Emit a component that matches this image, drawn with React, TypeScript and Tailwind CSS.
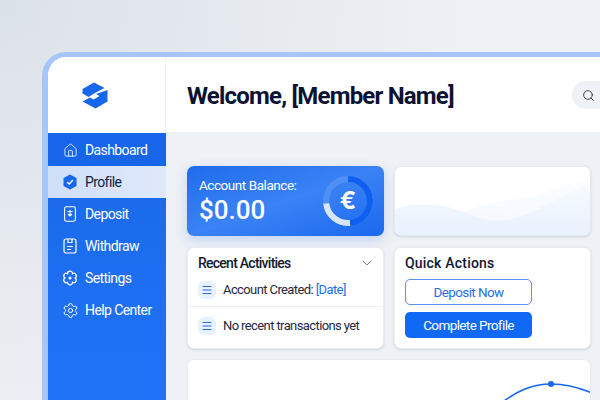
import type { ReactNode } from "react";
import { Settings, House, ChevronDown, Search, Menu } from "lucide-react";

const roboto = "font-['Roboto','Liberation_Sans',sans-serif]";

function Logo() {
  return (
    <svg width="26" height="27" viewBox="0 0 26 27" fill="#1667ea">
      <path d="M0.5 7 L12 0.5 L22.5 6 L12 11.5 L6.5 15 L0.5 11.5 Z" />
      <path d="M25.5 8 V19.5 L13.5 26.5 L0.5 19.5 L8 15.5 L11.5 17.5 L17.5 14 L14 12 Z" />
    </svg>
  );
}

function ProfileIcon() {
  return (
    <svg width="14" height="16" viewBox="0 0 14 16">
      <path d="M7 0.5 L13.5 4 V12 L7 15.5 L0.5 12 V4 Z" fill="#1667ea" />
      <path d="M4 8 L6.2 10 L10 6" fill="none" stroke="white" strokeWidth="1.5" />
    </svg>
  );
}

function DepositIcon() {
  return (
    <svg width="12" height="16" viewBox="0 0 12 16" fill="none" stroke="white" strokeWidth="1.1">
      <rect x="0.6" y="0.8" width="10.8" height="14.4" rx="1.6" />
      <path d="M3.5 5.5 H8.5 M6 4 V10 M4 8 L6 10 L8 8" />
    </svg>
  );
}

function WithdrawIcon() {
  return (
    <svg width="14" height="16" viewBox="0 0 14 16" fill="none" stroke="white" strokeWidth="1.2">
      <rect x="1" y="1" width="12" height="14" rx="2" />
      <path d="M5 1 V4.5 H9 V1 M4 8.5 H10 M4 11.5 H8" />
    </svg>
  );
}

function FlowerIcon() {
  return (
    <svg width="16" height="16" viewBox="0 0 16 16" fill="none" stroke="white" strokeWidth="1.2">
      <path d="M10.5 3.67 A2.5 2.5 0 0 1 13 8 A2.5 2.5 0 0 1 10.5 12.33 A2.5 2.5 0 0 1 5.5 12.33 A2.5 2.5 0 0 1 3 8 A2.5 2.5 0 0 1 5.5 3.67 A2.5 2.5 0 0 1 10.5 3.67 Z" />
      <circle cx="8" cy="8" r="1.5" fill="white" stroke="none" />
    </svg>
  );
}

const navItems = [
  { label: "Dashboard", icon: <House size={15} strokeWidth={1.3} color="white" /> },
  { label: "Profile", icon: <ProfileIcon />, active: true },
  { label: "Deposit", icon: <DepositIcon /> },
  { label: "Withdraw", icon: <WithdrawIcon /> },
  { label: "Settings", icon: <FlowerIcon /> },
  { label: "Help Center", icon: <Settings size={17} strokeWidth={1.4} color="white" /> },
];

function Sidebar() {
  return (
    <aside className="w-[118px] shrink-0 flex flex-col">
      <div className="h-[76px] shrink-0 flex items-center pl-[34px] bg-white border-r border-[#f1f3f7]">
        <Logo />
      </div>
      <div className={`flex-1 bg-gradient-to-b from-[#1a68ea] to-[#2073f5] text-white text-[14px] tracking-[-0.6px] ${roboto}`}>
        {navItems.map((item, i) => (
          <div
            key={item.label}
            className={`flex items-center ${i === 0 ? "h-[33px] pt-px bg-[#1766ea]" : "h-[32px]"} ${item.active ? "bg-gradient-to-r from-[#cfdff8] to-[#dfe9fa] text-[#12203f]" : ""}`}
          >
            <div className="w-[30px] ml-[7px] flex justify-center">{item.icon}</div>
            <span>{item.label}</span>
          </div>
        ))}
      </div>
    </aside>
  );
}

function BalanceCard() {
  return (
    <div className="h-[70px] rounded-[7px] bg-gradient-to-br from-[#1f6cec] via-[#3a82f5] to-[#1a68ee] shadow-[0_4px_12px_rgba(60,120,240,0.25)] flex items-center justify-between pl-[12px] pr-[11px] text-white">
      <div className={`flex flex-col ${roboto}`}>
        <span className="text-[13.5px] leading-[18px] tracking-[-0.45px]">Account Balance:</span>
        <span className="text-[26px] leading-[32px] font-medium">$0.00</span>
      </div>
      <div className="relative w-[50px] h-[50px] flex items-center justify-center">
        <svg width="50" height="50" viewBox="0 0 50 50" fill="none" strokeWidth="6" className="absolute inset-0">
          <circle cx="25" cy="25" r="22" stroke="#4f8ff5" />
          <path d="M25 3 A22 22 0 0 1 27 46.9" stroke="#0f5ff0" />
          <path d="M27 46.9 A22 22 0 0 1 3.2 27.5" stroke="#d8e6fd" />
        </svg>
        <span className="text-[24px] font-bold font-['Inter',sans-serif] leading-none">€</span>
      </div>
    </div>
  );
}

function ChartCard() {
  return (
    <div className="h-[70px] rounded-[7px] bg-white overflow-hidden border border-[#e3e9f4] shadow-sm">
      <svg width="197" height="70" viewBox="0 0 197 70" preserveAspectRatio="none">
        <defs>
          <linearGradient id="wave" x1="0" y1="0" x2="0" y2="1">
            <stop offset="0" stopColor="#f8fbff" />
            <stop offset="1" stopColor="#e6f0fc" />
          </linearGradient>
        </defs>
        <path d="M0 42 C20 36 50 34 68 46 C100 30 130 34 150 26 C165 18 180 14 197 14 V70 H0 Z" fill="url(#wave)" opacity="0.5" />
        <path d="M0 42 C25 34 50 38 72 46 C95 56 110 56 130 48 C150 40 175 24 197 16 V70 H0 Z" fill="url(#wave)" />
      </svg>
    </div>
  );
}

function ActivityRow({ children, className }: { children: ReactNode; className: string }) {
  return (
    <div className={`flex items-center gap-[7px] pl-[10px] text-[13px] tracking-[-0.6px] text-[#1f2a40] ${roboto} ${className}`}>
      <div className="w-[18px] h-[18px] rounded-[6px] bg-[#e8f1fd] flex items-center justify-center">
        <Menu size={12} strokeWidth={2} color="#1f6bec" />
      </div>
      <span>{children}</span>
    </div>
  );
}

function RecentCard() {
  return (
    <div className="h-[102px] rounded-[7px] bg-white border border-[#e8ecf3] shadow-sm">
      <div className="h-[25px] flex items-center justify-between pl-[10px] pr-[8px] pt-[5px]">
        <span className={`text-[14px] font-medium text-[#131a30] tracking-[-0.75px] ${roboto}`}>Recent Activities</span>
        <ChevronDown size={16} strokeWidth={1.2} color="#5b6475" />
      </div>
      <ActivityRow className="h-[34px] border-b border-[#edf0f5]">
        Account Created: <span className="text-[#1f6bec]">[Date]</span>
      </ActivityRow>
      <ActivityRow className="h-[37px]">No recent transactions yet</ActivityRow>
    </div>
  );
}

function QuickCard() {
  return (
    <div className={`h-[102px] rounded-[7px] bg-white border border-[#e8ecf3] shadow-sm pl-[10px] pt-[4px] flex flex-col text-[13.5px] tracking-[-0.6px] ${roboto}`}>
      <span className="text-[14px] leading-[22px] font-medium text-[#131a30] tracking-[0.2px]">Quick Actions</span>
      <div className="mt-[5px] w-[127px] h-[26px] rounded-[5px] border border-[#5b92ee] text-[#2a6ee6] flex items-center justify-center">
        Deposit Now
      </div>
      <div className="mt-[7px] w-[127px] h-[26px] rounded-[5px] bg-[#0f69f5] text-white flex items-center justify-center">
        Complete Profile
      </div>
    </div>
  );
}

export default function App() {
  return (
    <main className="w-[600px] h-[400px] overflow-hidden bg-[radial-gradient(circle_at_top_left,#dce2e9,#eef1f5_65%)] pl-[42px] pt-[52px]">
      <div className="w-[558px] h-[348px] flex rounded-tl-[24px] border-l-[6px] border-t-[5px] border-[#a6c5fa] overflow-hidden bg-white">
        <Sidebar />
        <div className="flex-1 flex flex-col min-w-0">
          <header className="h-[75px] shrink-0 bg-white flex items-center justify-between pl-[21px]">
            <h1 className={`mt-[3px] text-[24px] font-bold text-[#0b1233] tracking-[-0.8px] ${roboto}`}>Welcome, [Member Name]</h1>
            <div className="w-[36px] h-[28px] rounded-l-full bg-[#eef2f6] flex items-center pl-[10px] -mr-[8px] mt-[1px]">
              <Search size={13} strokeWidth={1.5} color="#1c2436" />
            </div>
          </header>
          <div className="flex-1 bg-[#eef1f5] pl-[21px] pr-[9px] pt-[34px] grid grid-cols-[197px_197px] gap-x-[10px] content-start">
            <BalanceCard />
            <ChartCard />
            <div className="col-span-2 h-[11px]" />
            <RecentCard />
            <QuickCard />
            <div className="col-span-2 h-[10px]" />
            <div className="col-span-2 h-[60px] rounded-[7px] bg-white border border-[#e8ecf3] overflow-hidden">
              <svg width="404" height="60" viewBox="0 0 404 60" fill="none">
                <path d="M312 44 C330 30 345 24 363 24 C378 24 392 28 404 33" stroke="#1667ea" strokeWidth="1.6" />
                <circle cx="363" cy="24" r="3" fill="#1667ea" />
              </svg>
            </div>
          </div>
        </div>
      </div>
    </main>
  );
}
